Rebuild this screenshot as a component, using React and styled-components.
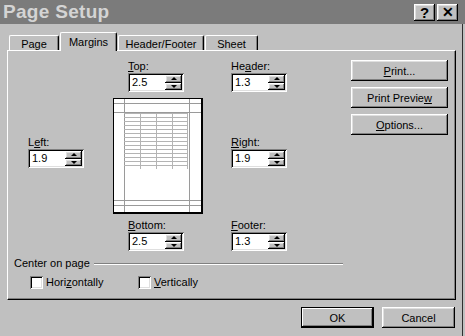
import React from 'react';
import styled, { createGlobalStyle, css } from 'styled-components';

const Global = createGlobalStyle`
  html, body {
    margin: 0;
    padding: 0;
    background: #c0c0c0;
  }
  * {
    box-sizing: border-box;
  }
`;

const raised = css`
  background: #c0c0c0;
  box-shadow: inset -1px -1px #000, inset 1px 1px #fff, inset -2px -2px #808080,
    inset 2px 2px #dfdfdf;
`;

const sunken = css`
  background: #fff;
  box-shadow: inset 1px 1px #808080, inset -1px -1px #fff, inset 2px 2px #000,
    inset -2px -2px #dfdfdf;
`;

const Window = styled.div`
  width: 465px;
  height: 336px;
  background: #c0c0c0;
  box-shadow: inset -2px 0 #c0c0c0, inset -3px 0 #303030;
  font-family: 'Liberation Sans', Arial, sans-serif;
  font-size: 11px;
  color: #000;
  display: flex;
  flex-direction: column;
  overflow: hidden;
`;

const TitleBar = styled.div`
  height: 24px;
  background: #7b7b7b;
  display: flex;
  align-items: center;
  justify-content: space-between;
  padding: 0 7px 0 3px;
`;

const Title = styled.div`
  font-size: 19px;
  font-weight: bold;
  color: #d4d4d4;
  letter-spacing: 0.3px;
`;

const Caps = styled.div`
  display: flex;
  gap: 2px;
`;

const CapButton = styled.div`
  ${raised};
  width: 21px;
  height: 17px;
  display: flex;
  align-items: center;
  justify-content: center;
  font-weight: bold;
  font-size: ${(p) => (p.$small ? '14px' : '15px')};
  line-height: 1;
`;

const TabRow = styled.div`
  display: flex;
  align-items: flex-end;
  height: 18px;
  margin-top: 8px;
  padding-left: 8px;
  position: relative;
  z-index: 1;
`;

const Tab = styled.div`
  width: ${(p) => p.$w}px;
  height: ${(p) => (p.$active ? 19 : 15)}px;
  margin-bottom: ${(p) => (p.$active ? -1 : 0)}px;
  margin-left: 1px;
  background: #c0c0c0;
  border-top: 1px solid #fff;
  border-left: 1px solid #fff;
  border-right: 1px solid #000;
  border-radius: 2px 2px 0 0;
  box-shadow: inset -1px 0 #808080;
  display: flex;
  align-items: center;
  justify-content: center;
  padding-top: ${(p) => (p.$active ? 0 : 1)}px;
`;

const Panel = styled.div`
  margin: 0 9px 0 7px;
  height: 250px;
  border-top: 1px solid #fff;
  border-left: 1px solid #fff;
  border-right: 1px solid #000;
  border-bottom: 1px solid #000;
  box-shadow: inset -1px -1px #808080;
  padding: 9px 6px 0 6px;
`;

const MarginsGrid = styled.div`
  margin-left: 14px;
  display: grid;
  grid-template-columns: 85px 90px 28px 120px 97px;
  grid-template-rows: 38px 116px auto;
`;

const Field = styled.div`
  grid-column: ${(p) => p.$col};
  grid-row: ${(p) => p.$row};
  margin-left: ${(p) => p.$indent || 0}px;
  margin-top: ${(p) => p.$top || 0}px;
  display: flex;
  flex-direction: column;
  align-self: start;
`;

const Label = styled.div`
  line-height: 13px;
`;

const Spinner = styled.div`
  ${sunken};
  width: 56px;
  height: 19px;
  display: flex;
  padding: 2px;
`;

const Value = styled.div`
  flex: 1;
  padding-left: 2px;
  line-height: 15px;
`;

const SpinCol = styled.div`
  width: 17px;
  display: flex;
  flex-direction: column;
`;

const SpinButton = styled.div`
  ${raised};
  flex: 1;
  display: flex;
  align-items: center;
  justify-content: center;
  &::after {
    content: '';
    border-left: 3px solid transparent;
    border-right: 3px solid transparent;
    ${(p) =>
      p.$down
        ? 'border-top: 3px solid #000;'
        : 'border-bottom: 3px solid #000;'}
  }
`;

const Preview = styled.div`
  grid-column: 2;
  grid-row: 2;
  width: 90px;
  height: 116px;
  background: #fff;
  border-top: 1px solid #000;
  border-left: 1px solid #000;
  border-right: 2px solid #000;
  border-bottom: 2px solid #000;
  align-self: start;
  display: flex;
`;

const Buttons = styled.div`
  grid-column: 5;
  grid-row: 1 / 3;
  display: flex;
  flex-direction: column;
  gap: 6px;
`;

const PushButton = styled.div`
  ${raised};
  width: ${(p) => p.$w || 97}px;
  height: 21px;
  display: flex;
  align-items: center;
  justify-content: center;
  ${(p) =>
    p.$default &&
    css`
      border: 1px solid #000;
      box-shadow: inset -1px -1px #000, inset 1px 1px #fff,
        inset -2px -2px #808080;
    `}
`;

const GroupHead = styled.div`
  width: 329px;
  margin-top: 5px;
  display: flex;
  align-items: center;
  gap: 4px;
  line-height: 14px;
`;

const Rule = styled.div`
  flex: 1;
  height: 2px;
  border-top: 1px solid #808080;
  border-bottom: 1px solid #fff;
  margin-top: 1px;
`;

const Checks = styled.div`
  display: flex;
  padding-left: 16px;
  margin-top: 5px;
`;

const CheckItem = styled.label`
  width: 108px;
  display: flex;
  align-items: center;
  gap: 3px;
  line-height: 14px;
`;

const Box = styled.span`
  ${sunken};
  width: 13px;
  height: 13px;
`;

const Footer = styled.div`
  display: flex;
  justify-content: flex-end;
  gap: 8px;
  padding-right: 10px;
  margin-top: 7px;
`;

const Spin = ({ label, value, col, row, indent, top }) => (
  <Field $col={col} $row={row} $indent={indent} $top={top}>
    <Label>{label}</Label>
    <Spinner>
      <Value>{value}</Value>
      <SpinCol>
        <SpinButton />
        <SpinButton $down />
      </SpinCol>
    </Spinner>
  </Field>
);

const PageThumb = () => {
  const rows = [];
  for (let y = 14; y <= 69; y += 4) rows.push(y);
  return (
    <svg width="87" height="113" viewBox="0 0 87 113">
      <g stroke="#9a9a9a" strokeWidth="1" shapeRendering="crispEdges">
        <line x1="10.5" y1="0" x2="10.5" y2="113" />
        <line x1="75.5" y1="0" x2="75.5" y2="113" />
        <line x1="0" y1="4.5" x2="87" y2="4.5" />
        <line x1="0" y1="13.5" x2="87" y2="13.5" />
        <line x1="0" y1="101.5" x2="87" y2="101.5" />
        <line x1="0" y1="106.5" x2="87" y2="106.5" />
      </g>
      <g stroke="#b4b4b4" strokeWidth="1" shapeRendering="crispEdges">
        {rows.map((y) => (
          <line key={y} x1="10" y1={y + 0.5} x2="73" y2={y + 0.5} />
        ))}
        {[26, 42, 58, 73].map((x) => (
          <line key={x} x1={x + 0.5} y1="14" x2={x + 0.5} y2="70" />
        ))}
      </g>
    </svg>
  );
};

export default function App() {
  return (
    <>
      <Global />
      <Window>
        <TitleBar>
          <Title>Page Setup</Title>
          <Caps>
            <CapButton>?</CapButton>
            <CapButton $small>✕</CapButton>
          </Caps>
        </TitleBar>
        <TabRow>
          <Tab $w={50}>Page</Tab>
          <Tab $w={57} $active>
            Margins
          </Tab>
          <Tab $w={86}>Header/Footer</Tab>
          <Tab $w={53}>Sheet</Tab>
        </TabRow>
        <Panel>
          <MarginsGrid>
            <Spin label={<><u>T</u>op:</>} value="2.5" col={2} row={1} indent={15} />
            <Spin label={<>He<u>a</u>der:</>} value="1.3" col={4} row={1} />
            <Preview>
              <PageThumb />
            </Preview>
            <Spin label={<>L<u>e</u>ft:</>} value="1.9" col={1} row={2} top={38} />
            <Spin label={<><u>R</u>ight:</>} value="1.9" col={4} row={2} top={38} />
            <Spin label={<><u>B</u>ottom:</>} value="2.5" col={2} row={3} indent={15} top={5} />
            <Spin label={<><u>F</u>ooter:</>} value="1.3" col={4} row={3} top={5} />
            <Buttons>
              <PushButton>
                <span><u>P</u>rint...</span>
              </PushButton>
              <PushButton>
                <span>Print Previe<u>w</u></span>
              </PushButton>
              <PushButton>
                <span><u>O</u>ptions...</span>
              </PushButton>
            </Buttons>
          </MarginsGrid>
          <GroupHead>
            <span>Center on page</span>
            <Rule />
          </GroupHead>
          <Checks>
            <CheckItem>
              <Box />
              <span>Hori<u>z</u>ontally</span>
            </CheckItem>
            <CheckItem>
              <Box />
              <span><u>V</u>ertically</span>
            </CheckItem>
          </Checks>
        </Panel>
        <Footer>
          <PushButton $w={73} $default>OK</PushButton>
          <PushButton $w={73}>Cancel</PushButton>
        </Footer>
      </Window>
    </>
  );
}
